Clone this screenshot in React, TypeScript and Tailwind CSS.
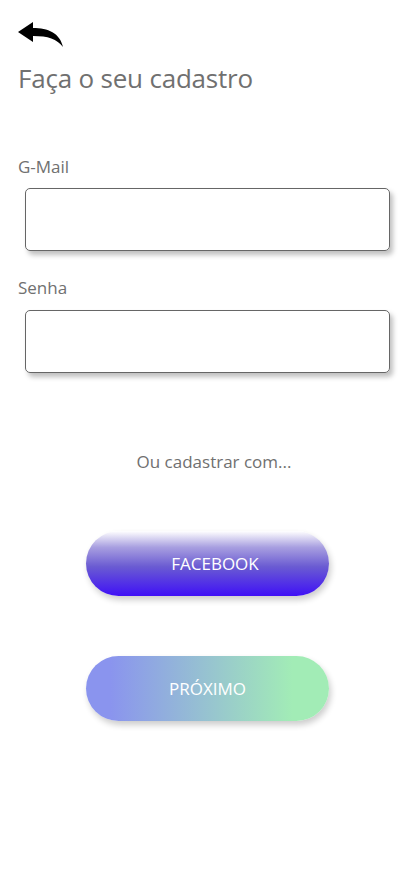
import { useState } from 'react'

const FONT = { fontFamily: '"Open Sans", "Noto Sans", sans-serif' }

function BackArrow() {
  return (
    <svg width="46" height="26" viewBox="0 0 46 26" fill="#000">
      <path d="M0 10 L15 0 L15 6 C30 6 42 11 45 25 C39 17 30 14 15 14 L15 20 Z" />
    </svg>
  )
}

export default function App() {
  const [email, setEmail] = useState('')
  const [senha, setSenha] = useState('')

  return (
    <div className="w-[414px] h-[896px] bg-white text-[#707070]" style={FONT}>
      <div className="pt-[22px] pl-[18px]">
        <BackArrow />
      </div>
      <h1 className="pl-[18px] mt-[13px] text-[26px] leading-[34px] tracking-[-0.2px]">Faça o seu cadastro</h1>

      <label className="block pl-[18px] mt-[61px] text-[17px] leading-[22px]">G-Mail</label>
      <input
        value={email}
        onChange={e => setEmail(e.target.value)}
        className="block ml-[25px] mt-[10px] w-[365px] h-[63px] border border-[#666] rounded-[5px] shadow-[3px_4px_5px_rgba(0,0,0,0.25)] outline-none px-3"
      />

      <label className="block pl-[18px] mt-[26px] text-[17px] leading-[22px]">Senha</label>
      <input
        type="password"
        value={senha}
        onChange={e => setSenha(e.target.value)}
        className="block ml-[25px] mt-[11px] w-[365px] h-[63px] border border-[#666] rounded-[5px] shadow-[3px_4px_5px_rgba(0,0,0,0.25)] outline-none px-3"
      />

      <p className="mt-[78px] text-center text-[17px] leading-[22px] pl-[14px]">Ou cadastrar com...</p>

      <div className="flex flex-col items-center pl-[1px] mt-[58px] gap-[60px]">
        <button className="w-[243px] h-[65px] pl-[15px] rounded-full text-white text-[17px] bg-[linear-gradient(180deg,#ffffff_0%,#a89fe0_25%,#6a5bd2_55%,#3f10f6_100%)] shadow-[2px_4px_6px_rgba(0,0,0,0.2)]">
          FACEBOOK
        </button>
        <button className="w-[243px] h-[65px] rounded-full text-white text-[17px] bg-[linear-gradient(90deg,#8a94ee_10%,#a2ecb6_85%)] shadow-[2px_4px_6px_rgba(0,0,0,0.2)]">
          PRÓXIMO
        </button>
      </div>
    </div>
  )
}
